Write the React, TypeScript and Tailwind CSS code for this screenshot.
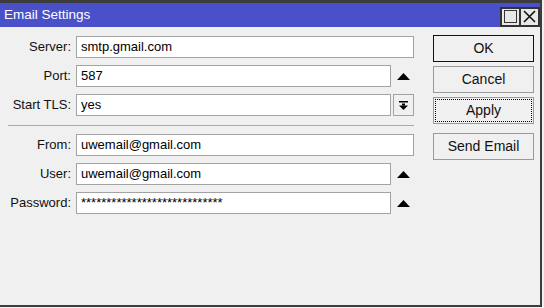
import React from 'react';

const font = { fontFamily: '"Liberation Sans", Arial, sans-serif' };

function UpArrow() {
  return (
    <svg width="13" height="7" viewBox="0 0 13 7" className="ml-[6px] shrink-0">
      <polygon points="6.5,0 13,7 0,7" fill="#000" />
    </svg>
  );
}

function Field({ label, value, short, arrow, dropdown }: { label: string; value: string; short?: boolean; arrow?: boolean; dropdown?: boolean }) {
  return (
    <div className="flex h-[22px] items-center">
      <div className="w-[72px] shrink-0 pr-[1px] text-right text-[13px] text-[#111]">{label}</div>
      <div
        className={`ml-[4px] flex h-[22px] items-center border border-[#a3a3a3] bg-white pl-[4px] text-[13px] text-black ${
          short ? 'w-[315px]' : 'w-[338px]'
        }`}
      >
        {value}
      </div>
      {arrow && <UpArrow />}
      {dropdown && (
        <div className="ml-[2px] flex h-[22px] w-[21px] items-center justify-center border border-[#a3a3a3] bg-[#f0f0f0]">
          <svg width="9" height="9" viewBox="0 0 9 9">
            <rect x="0" y="0" width="9" height="1.5" fill="#000" />
            <rect x="3" y="2.5" width="3" height="2" fill="#000" />
            <polygon points="0,4.5 9,4.5 4.5,9" fill="#000" />
          </svg>
        </div>
      )}
    </div>
  );
}

function Btn({ label, variant }: { label: string; variant?: 'default' | 'focus' }) {
  const border = variant === 'default' ? 'border-[#111]' : 'border-[#9a9a9a]';
  return (
    <div className={`flex h-[27px] w-[101px] items-center justify-center border ${border} bg-[#f0f0f0] p-[1px]`}>
      <div
        className={`flex h-full w-full items-center justify-center text-[14px] text-[#111] ${
          variant === 'focus' ? 'border border-dotted border-black' : ''
        }`}
      >
        {label}
      </div>
    </div>
  );
}

export default function App() {
  return (
    <div className="h-[308px] w-[544px] overflow-hidden bg-[#f0f0f0]" style={font}>
      <div className="flex h-[307px] w-[542px] flex-col border-t-[3px] border-r-2 border-b-2 border-[#3c3c3c]">
        {/* Title bar */}
        <div className="flex h-[24px] shrink-0 items-center justify-between bg-[#4a4fca] pl-[4px]">
          <span className="text-[13.5px] text-white">Email Settings</span>
          <div className="mt-[3px] flex">
            <div className="flex h-[20px] w-[21px] items-center justify-center border-2 border-[#333] bg-[#e8e8e8]">
              <div className="h-[13px] w-[13px] border border-[#333]" />
            </div>
            <div className="-ml-[2px] flex h-[20px] w-[21px] items-center justify-center border-2 border-[#333] bg-[#e8e8e8]">
              <svg width="13" height="13" viewBox="0 0 13 13">
                <path d="M1 1 L12 12 M12 1 L1 12" stroke="#111" strokeWidth="1.6" />
              </svg>
            </div>
          </div>
        </div>

        {/* Body */}
        <div className="flex flex-1 bg-[#f0f0f0]">
          <div className="flex flex-col pt-[9px]">
            <div className="flex flex-col gap-[7px]">
              <Field label="Server:" value="smtp.gmail.com" />
              <Field label="Port:" value="587" short arrow />
              <Field label="Start TLS:" value="yes" short dropdown />
            </div>
            <div className="ml-[8px] mt-[9px] mb-[8px] h-px w-[406px] bg-[#a8a8a8]" />
            <div className="flex flex-col gap-[7px]">
              <Field label="From:" value="uwemail@gmail.com" />
              <Field label="User:" value="uwemail@gmail.com" short arrow />
              <Field label="Password:" value="****************************" short arrow />
            </div>
          </div>
          <div className="ml-[19px] flex flex-col pt-[8px]">
            <Btn label="OK" variant="default" />
            <div className="mt-[4px]">
              <Btn label="Cancel" />
            </div>
            <div className="mt-[4px]">
              <Btn label="Apply" variant="focus" />
            </div>
            <div className="mt-[9px]">
              <Btn label="Send Email" />
            </div>
          </div>
        </div>
      </div>
    </div>
  );
}
